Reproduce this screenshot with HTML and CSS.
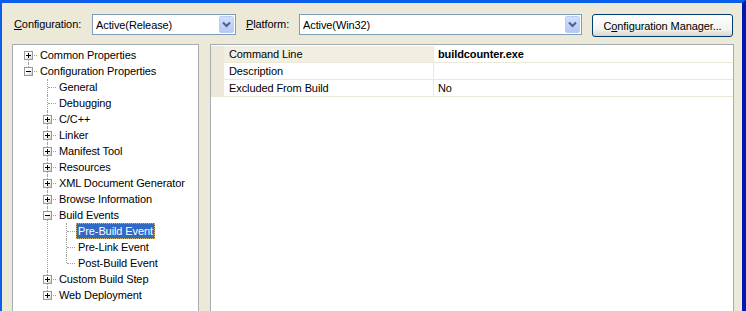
FILE: index.html
```html
<!DOCTYPE html>
<html lang="en">

<head>
  <meta charset="UTF-8">
  <meta name="viewport" content="width=device-width, initial-scale=1.0">
  <title>Property Pages</title>
  <link rel="stylesheet" href="styles.css">
</head>

<body>
  <div class="window">
    <div class="toolbar">
      <label class="toolbar__label toolbar__label_config"><u>C</u>onfiguration:</label>
      <div class="combo combo_config">
        <span class="combo__text">Active(Release)</span>
        <span class="combo__arrow">
          <svg width="15" height="17" viewBox="0 0 15 17"><path d="M4 6.5 L7.5 10 L11 6.5" fill="none" stroke="#4d6185" stroke-width="2"/></svg>
        </span>
      </div>
      <label class="toolbar__label toolbar__label_platform"><u>P</u>latform:</label>
      <div class="combo combo_platform">
        <span class="combo__text">Active(Win32)</span>
        <span class="combo__arrow">
          <svg width="15" height="17" viewBox="0 0 15 17"><path d="M4 6.5 L7.5 10 L11 6.5" fill="none" stroke="#4d6185" stroke-width="2"/></svg>
        </span>
      </div>
      <button class="btn">C<u>o</u>nfiguration Manager...</button>
    </div>

    <div class="panes">
      <div class="tree">
        <ul class="tree__list tree__list_root">
          <li class="tree__item">
            <span class="tree__toggle"></span>
            <span class="tree__label">Common Properties</span>
          </li>
          <li class="tree__item">
            <span class="tree__toggle tree__toggle_open"></span>
            <span class="tree__label">Configuration Properties</span>
            <ul class="tree__list">
              <li class="tree__item"><span class="tree__label">General</span></li>
              <li class="tree__item"><span class="tree__label">Debugging</span></li>
              <li class="tree__item"><span class="tree__toggle"></span><span class="tree__label">C/C++</span></li>
              <li class="tree__item"><span class="tree__toggle"></span><span class="tree__label">Linker</span></li>
              <li class="tree__item"><span class="tree__toggle"></span><span class="tree__label">Manifest Tool</span></li>
              <li class="tree__item"><span class="tree__toggle"></span><span class="tree__label">Resources</span></li>
              <li class="tree__item"><span class="tree__toggle"></span><span class="tree__label">XML Document Generator</span></li>
              <li class="tree__item"><span class="tree__toggle"></span><span class="tree__label">Browse Information</span></li>
              <li class="tree__item">
                <span class="tree__toggle tree__toggle_open"></span>
                <span class="tree__label">Build Events</span>
                <ul class="tree__list">
                  <li class="tree__item"><span class="tree__label tree__label_selected">Pre-Build Event</span></li>
                  <li class="tree__item"><span class="tree__label">Pre-Link Event</span></li>
                  <li class="tree__item"><span class="tree__label">Post-Build Event</span></li>
                </ul>
              </li>
              <li class="tree__item"><span class="tree__toggle"></span><span class="tree__label">Custom Build Step</span></li>
              <li class="tree__item"><span class="tree__toggle"></span><span class="tree__label">Web Deployment</span></li>
            </ul>
          </li>
        </ul>
      </div>

      <div class="grid">
        <div class="grid__row grid__row_active">
          <div class="grid__gutter"></div>
          <div class="grid__name">Command Line</div>
          <div class="grid__value grid__value_bold">buildcounter.exe</div>
        </div>
        <div class="grid__row">
          <div class="grid__gutter"></div>
          <div class="grid__name">Description</div>
          <div class="grid__value"></div>
        </div>
        <div class="grid__row">
          <div class="grid__gutter"></div>
          <div class="grid__name">Excluded From Build</div>
          <div class="grid__value">No</div>
        </div>
      </div>
    </div>
  </div>
</body>

</html>
```

FILE: styles.css
```css
* {
  box-sizing: border-box;
}

html,
body {
  margin: 0;
  height: 100%;
  overflow: hidden;
}

body {
  font-family: "Liberation Sans", Arial, sans-serif;
  font-size: 11px;
  letter-spacing: -0.1px;
  color: #000;
  background-color: #ece9d8;
}

.window {
  display: flex;
  flex-direction: column;
  height: 100%;
  background-color: #ece9d8;
  border-top: 3px solid #0a5ee9;
  border-left: 2px solid #0a5ee9;
  border-right: 4px solid #0019b0;
  padding: 11px 8px 0 10px;
}

/* top bar */

.toolbar {
  display: flex;
  align-items: flex-start;
  height: 23px;
  flex: 0 0 auto;
}

.toolbar__label {
  line-height: 21px;
  margin-left: 2px;
}

.toolbar__label_config {
  width: 78px;
}

.toolbar__label_platform {
  width: 53px;
}

.toolbar__label u {
  text-decoration-thickness: 1px;
}

.combo {
  display: flex;
  align-items: center;
  height: 21px;
  background-color: #fff;
  border: 1px solid #7f9db9;
  padding: 1px;
  margin-right: 8px;
}

.combo_config {
  width: 144px;
}

.combo_platform {
  width: 283px;
  margin-right: 10px;
}

.combo__text {
  flex: 1 1 auto;
  padding-left: 2px;
}

.combo__arrow {
  display: block;
  width: 15px;
  height: 17px;
  border: 1px solid #bacdf7;
  border-radius: 2px;
  background: linear-gradient(#d2e0fd, #b3c8f5);
}

.combo__arrow svg {
  display: block;
  margin: -1px;
}

.btn {
  width: 141px;
  height: 23px;
  padding: 0;
  font: inherit;
  letter-spacing: inherit;
  color: #000;
  border: 1px solid #003c74;
  border-radius: 3px;
  background: linear-gradient(#fff, #f3f2ec 70%, #d8d4c6);
}

/* panes */

.panes {
  display: flex;
  flex: 1 1 auto;
  min-height: 0;
  margin-top: 7px;
}

.tree {
  width: 187px;
  background-color: #fff;
  border: 1px solid #a5acb2;
  border-bottom: 0;
  padding-top: 2px;
  margin-right: 11px;
  overflow: hidden;
}

.tree__list {
  list-style: none;
  margin: 0 0 0 -6px;
  padding: 0;
}

.tree__list_root {
  margin-left: 0;
}

.tree__item {
  position: relative;
  padding-left: 25px;
}

.tree__item::before {
  content: '';
  position: absolute;
  left: 15px;
  top: 0;
  bottom: 0;
  border-left: 1px dotted #a0a0a0;
}

.tree__item:last-child::before {
  bottom: auto;
  height: 8px;
}

.tree__list_root>.tree__item:first-child::before {
  top: 8px;
  bottom: 0;
  height: auto;
}

.tree__item::after {
  content: '';
  position: absolute;
  left: 16px;
  top: 8px;
  width: 8px;
  border-top: 1px dotted #a0a0a0;
}

.tree__toggle {
  position: absolute;
  z-index: 1;
  left: 11px;
  top: 4px;
  width: 9px;
  height: 9px;
  border: 1px solid #919b9c;
  background: linear-gradient(135deg, #fff 40%, #d6d2c2);
}

.tree__toggle::before,
.tree__toggle::after {
  content: '';
  position: absolute;
  background-color: #000;
}

.tree__toggle::before {
  left: 1px;
  top: 3px;
  width: 5px;
  height: 1px;
}

.tree__toggle::after {
  left: 3px;
  top: 1px;
  width: 1px;
  height: 5px;
}

.tree__toggle_open::after {
  display: none;
}

.tree__label {
  display: inline-block;
  height: 16px;
  line-height: 14px;
  padding: 0 1px;
  border: 1px solid transparent;
  white-space: nowrap;
}

.tree__label_selected {
  color: #fff;
  background-color: #316ac5;
  border: 1px dotted #c8b46a;
}

/* property grid */

.grid {
  width: 524px;
  background-color: #fff;
  border: 1px solid #a5acb2;
  border-bottom: 0;
  padding-top: 1px;
  overflow: hidden;
}

.grid__row {
  display: grid;
  grid-template-columns: 13px 210px 1fr;
  height: 17px;
  border-bottom: 1px solid #ece9d8;
}

.grid__gutter {
  background-color: #ece9d8;
}

.grid__name {
  line-height: 16px;
  padding-left: 5px;
  border-right: 1px solid #ece9d8;
}

.grid__row_active .grid__name {
  background-color: #f1efe2;
}

.grid__value {
  line-height: 16px;
  padding-left: 4px;
}

.grid__value_bold {
  font-weight: bold;
}
```
